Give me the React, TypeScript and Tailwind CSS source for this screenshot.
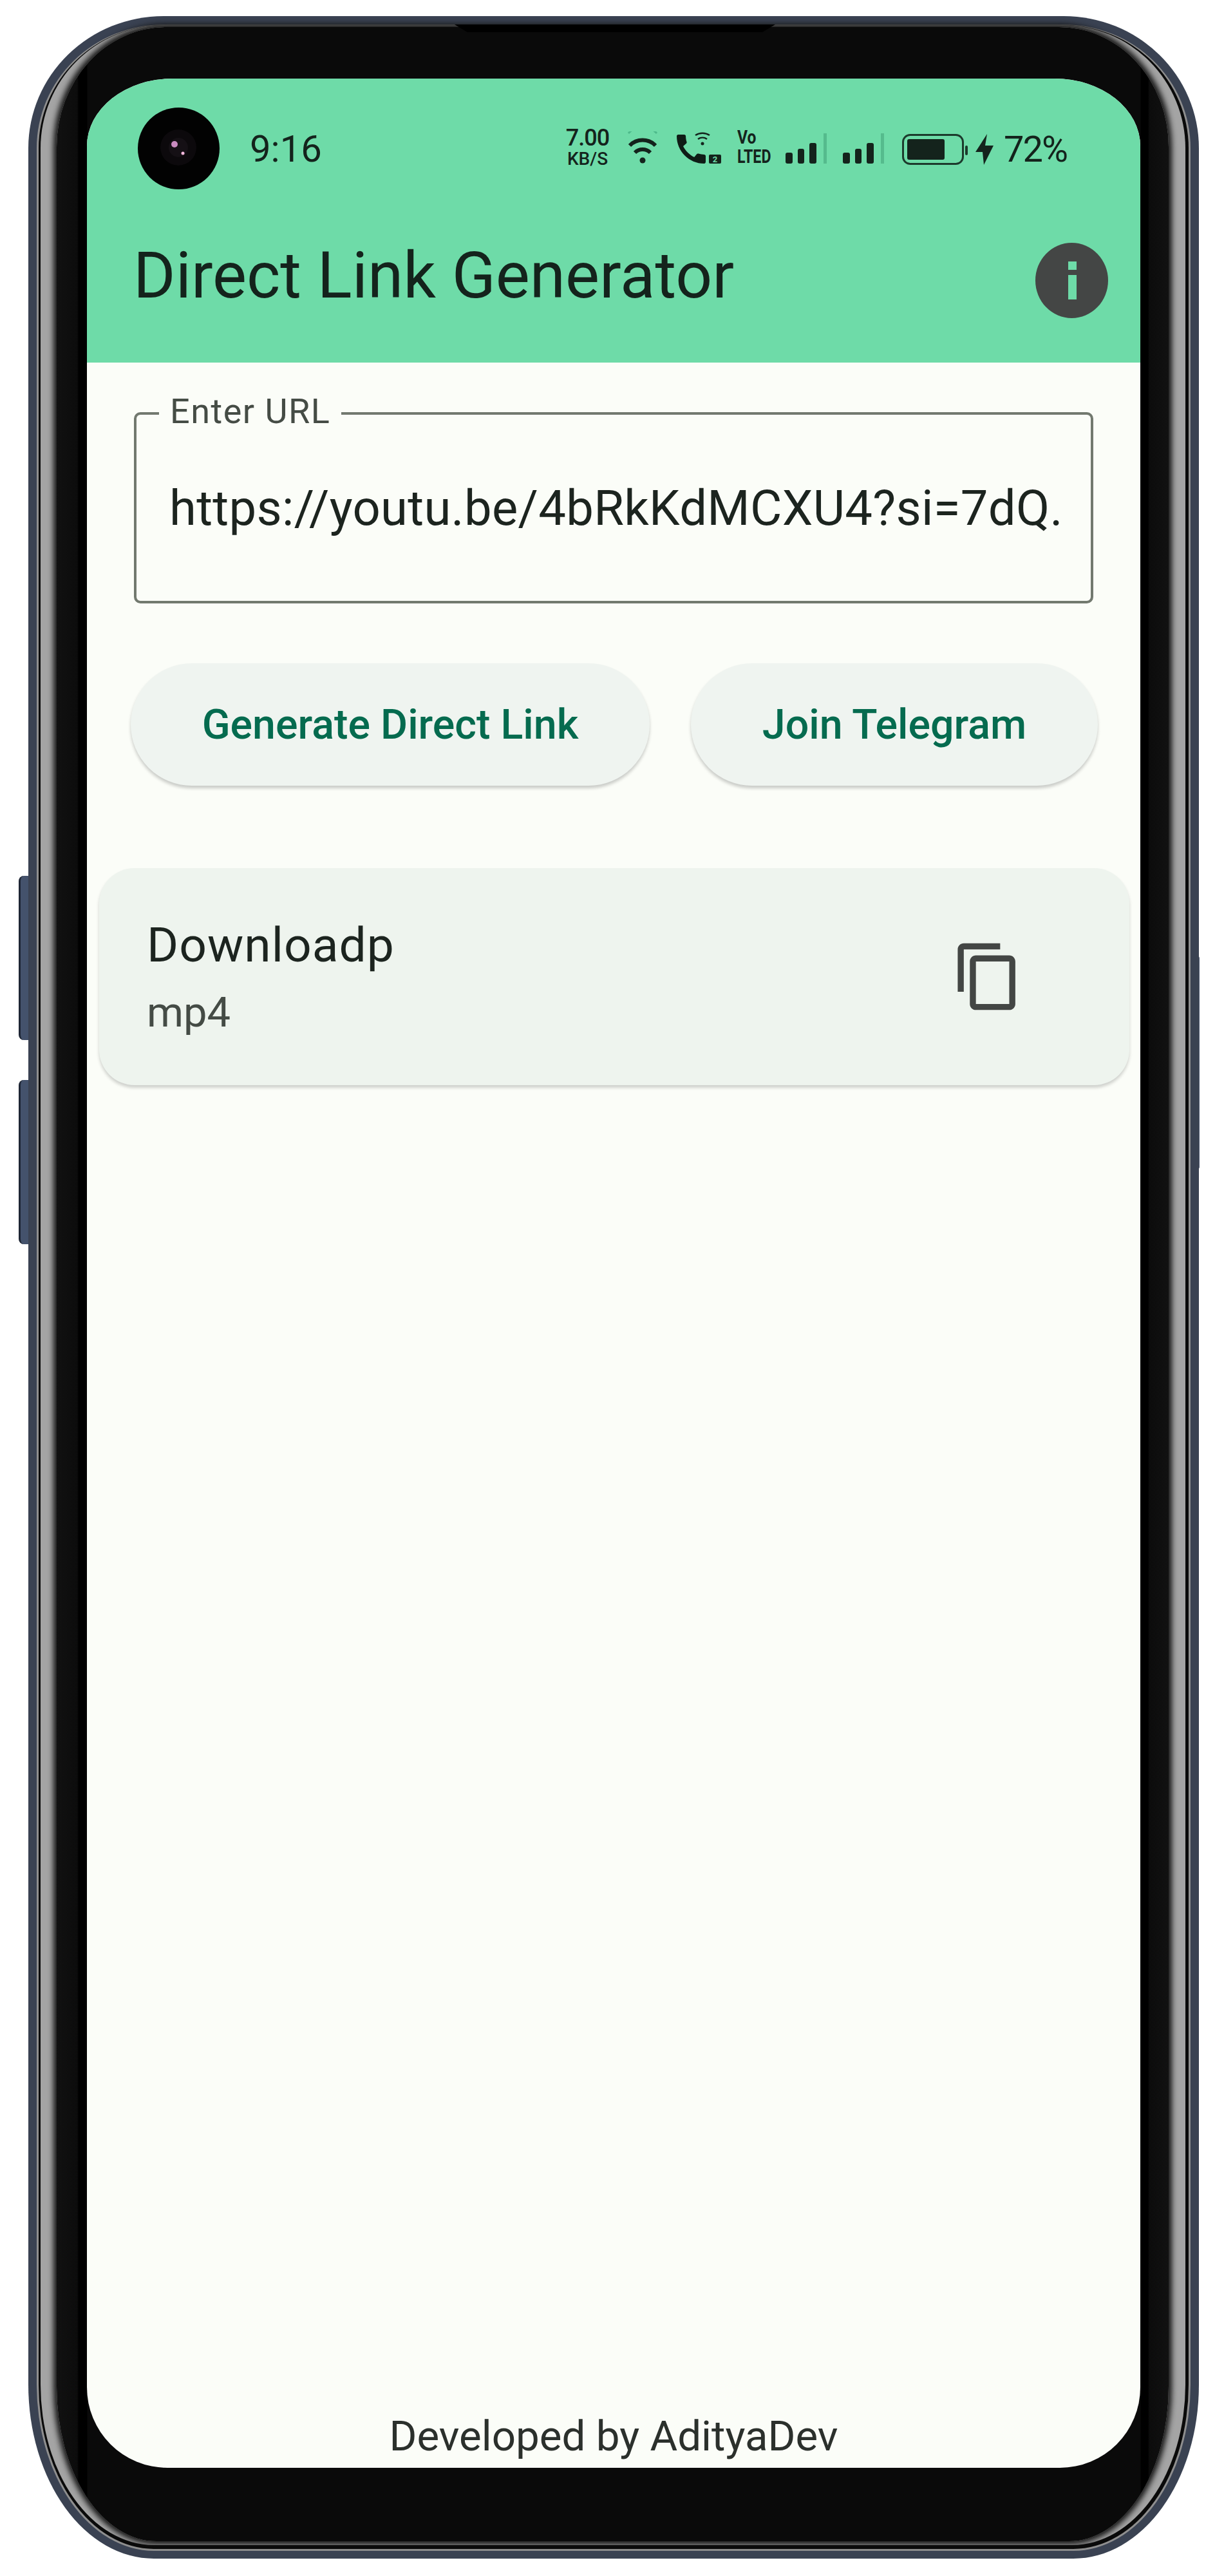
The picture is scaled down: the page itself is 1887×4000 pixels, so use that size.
function Camera() {
  return (
    <svg className="w-[127px] h-[127px] shrink-0" viewBox="0 0 127 127">
      <circle cx="63.5" cy="63.5" r="63.5" fill="#020202" />
      <circle cx="63" cy="62" r="28" fill="#0c090c" />
      <circle cx="63" cy="62" r="15" fill="#151015" />
      <circle cx="57" cy="57" r="5" fill="#c98bc0" />
      <circle cx="70" cy="71" r="2.5" fill="#f4b8dc" />
    </svg>
  );
}

function Wifi() {
  return (
    <svg className="w-[51px] h-[50px]" viewBox="0 0 51 50" fill="none" stroke="#14231c" strokeWidth="6">
      <path d="M3 3 A30 30 0 0 1 47 3" stroke="#4db98a" strokeWidth="3" />
      <path d="M5 22 A28 28 0 0 1 45 22" />
      <path d="M13 33 A17 17 0 0 1 37 33" />
      <circle cx="25" cy="45" r="4.5" fill="#14231c" stroke="none" />
    </svg>
  );
}

function WifiCall() {
  return (
    <svg className="w-[69px] h-[50px]" viewBox="0 0 69 50">
      <path
        transform="translate(-7.5,-2.5) scale(2.5)"
        fill="#0f1c16"
        d="M20.01 15.38c-1.23 0-2.42-.2-3.53-.56-.35-.12-.74-.03-1.01.24l-1.57 1.97c-2.83-1.35-5.48-3.9-6.89-6.83l1.95-1.66c.27-.28.35-.67.24-1.02-.37-1.11-.56-2.3-.56-3.53 0-.54-.45-.99-.99-.99H4.19C3.65 3 3 3.24 3 3.99 3 13.28 10.73 21 20.01 21c.71 0 .99-.63.99-1.18v-3.45c0-.54-.45-.99-.99-.99z"
      />
      <g fill="none" stroke="#14231c" strokeWidth="2.5">
        <path d="M29 6 A20 20 0 0 1 51 6" />
        <path d="M33 12 A12 12 0 0 1 47 12" />
      </g>
      <circle cx="40" cy="19" r="2.5" fill="#14231c" />
      <rect x="50" y="36" width="19" height="14" rx="2" fill="#14231c" />
      <text x="59.5" y="48" fontSize="13" fontWeight="700" textAnchor="middle" fill="#6edba8">
        2
      </text>
    </svg>
  );
}

function Signal() {
  return (
    <svg className="w-[65px] h-[47px]" viewBox="0 0 65 47">
      <rect x="0" y="30" width="11" height="17" rx="3" fill="#14231c" />
      <rect x="19" y="24" width="10" height="23" rx="3" fill="#14231c" />
      <rect x="37" y="15" width="11" height="32" rx="3" fill="#14231c" />
      <rect x="59" y="0" width="5" height="47" fill="#55bb8d" />
    </svg>
  );
}

function Battery() {
  return (
    <svg className="w-[102px] h-[48px]" viewBox="0 0 102 48">
      <rect x="1.5" y="1.5" width="93" height="45" rx="11" fill="none" stroke="#1c3a2c" strokeWidth="3" />
      <rect x="8" y="8" width="58" height="32" rx="3" fill="#14231c" />
      <rect x="98" y="18" width="4" height="15" rx="2" fill="#1c3a2c" />
    </svg>
  );
}

function Bolt() {
  return (
    <svg className="w-[28px] h-[48px]" viewBox="0 0 28 48">
      <polygon points="18,0 0,28 11,28 13,48 28,18 15,18" fill="#14231c" />
    </svg>
  );
}

function StatusBar() {
  return (
    <div className="flex items-center h-[127px] mt-[45px] pl-[79px] pr-[114px] text-[#14231c]">
      <Camera />
      <span className="ml-[47px] text-[58px] leading-none">9:16</span>
      <div className="ml-auto -mt-[4px] flex items-center">
        <div className="w-[71px] flex flex-col items-center font-medium leading-none">
          <span className="text-[36px] tracking-[-1px]">7.00</span>
          <span className="text-[28px] mt-[1px]">KB/S</span>
        </div>
        <div className="ml-[25px]">
          <Wifi />
        </div>
        <div className="ml-[27px]">
          <WifiCall />
        </div>
        <div className="ml-[25px] w-[51px] flex flex-col font-bold leading-none">
          <span className="text-[29px] origin-left scale-x-[0.85]">Vo</span>
          <span className="text-[29px] mt-[1px] origin-left scale-x-[0.8]">LTED</span>
        </div>
        <div className="ml-[24px] pt-[3px]">
          <Signal />
        </div>
        <div className="ml-[24px] pt-[3px]">
          <Signal />
        </div>
        <div className="ml-[27px] pt-[6px]">
          <Battery />
        </div>
        <div className="ml-[12px] pt-[6px]">
          <Bolt />
        </div>
        <span className="ml-[16px] pt-[6px] text-[56px] leading-none tracking-[-2px]">72%</span>
      </div>
    </div>
  );
}

function AppBar() {
  return (
    <div className="h-[441px] shrink-0 bg-[#6edba8]">
      <StatusBar />
      <div className="flex items-center justify-between mt-[83px] pl-[72px] pr-[50px]">
        <h1 className="text-[100px] leading-none pb-[16px] font-normal text-[#14231c]">Direct Link Generator</h1>
        <svg className="w-[113px] h-[117px]" viewBox="0 0 113 117">
          <ellipse cx="56.5" cy="58.5" rx="56.5" ry="58.5" fill="#444645" />
          <rect x="51" y="29" width="13" height="13" fill="#6edba8" />
          <rect x="51" y="50" width="13" height="38" fill="#6edba8" />
        </svg>
      </div>
    </div>
  );
}

function UrlField() {
  return (
    <div className="relative ml-[73px] mt-[77px] w-[1490px] h-[297px] shrink-0 rounded-[10px] border-[4px] border-[#72796f] pl-[51px] pr-[40px] pt-[103px]">
      <span className="absolute left-[35px] top-[-30px] bg-[#fbfdf8] px-[17px] text-[54px] leading-[50px] tracking-[1.5px] text-[#454c45]">
        Enter URL
      </span>
      <div className="whitespace-nowrap text-[76px] leading-[85px] tracking-[0.3px] text-[#1c241f]">
        https://youtu.be/4bRkKdMCXU4?si=7dQ.
      </div>
    </div>
  );
}

function PillButton({ label, width }: { label: string; width: string }) {
  return (
    <button className={`${width} h-[190px] rounded-full bg-[#eff4f0] text-[64.5px] font-medium text-[#056b4f] shadow-[0_4px_5px_rgba(0,0,0,0.2)]`}>
      {label}
    </button>
  );
}

function ResultCard() {
  return (
    <div className="flex items-center justify-between ml-[19px] mt-[128px] w-[1600px] h-[337px] shrink-0 rounded-[55px] bg-[#eef4ee] pl-[74px] pr-[163px] shadow-[0_4px_5px_rgba(0,0,0,0.18)]">
      <div className="flex flex-col">
        <span className="text-[75px] leading-[82px] tracking-[1px] text-[#1c241f]">Downloadp</span>
        <span className="text-[65px] leading-[70px] mt-[29px] text-[#444b45]">mp4</span>
      </div>
      <svg className="w-[113px] h-[113px]" viewBox="0 0 24 24" fill="#434644">
        <path d="M16 1H4c-1.1 0-2 .9-2 2v14h2V3h12V1zm3 4H8c-1.1 0-2 .9-2 2v14c0 1.1.9 2 2 2h11c1.1 0 2-.9 2-2V7c0-1.1-.9-2-2-2zm0 16H8V7h11v14z" />
      </svg>
    </div>
  );
}

export default function App() {
  return (
    <div className="w-[1887px] h-[4000px] bg-white pl-[44px] pt-[25px] font-[Roboto,sans-serif]">
      <div className="relative w-[1818px] h-[3948px]">
        {/* side buttons */}
        <div className="absolute left-[-15px] top-[1335px] w-[24px] h-[255px] rounded-l-[8px] border-l-[3px] border-[#1e2635] bg-[#44526c]" />
        <div className="absolute left-[-15px] top-[1652px] w-[24px] h-[255px] rounded-l-[8px] border-l-[3px] border-[#1e2635] bg-[#44526c]" />
        <div className="absolute right-[-1px] top-[1460px] w-[9px] h-[330px] rounded-r-[3px] bg-[#525d74]" />

        {/* frame layers */}
        <div className="relative flex h-full rounded-[210px_210px_195px_195px/205px_205px_270px_270px] bg-[#3a4252] p-[13px] pb-[12px]">
          <div className="flex flex-1 rounded-[197px_197px_182px_182px/192px_192px_258px_258px] bg-[#8f8f8f] px-[3px] pt-[1px] pb-[3px]">
            <div className="flex flex-1 rounded-[194px_194px_179px_179px/191px_191px_255px_255px] bg-[#0a0a0a] pl-[3px] pr-[5px] pb-[6px]">
              <div className="flex flex-1 rounded-[191px_191px_176px_176px/191px_191px_249px_249px] bg-[#a4a4a4] pl-[25px] pr-[26px] pt-[3px] pb-[6px]">
                <div className="flex flex-1 rounded-[170px_170px_155px_155px/186px_186px_240px_240px] bg-[linear-gradient(90deg,#111_0,#0c0c0c_32px,#000_34px,#000_47px,#0a0a0a_48px,#0a0a0a_1683px,#000_1684px,#000_1695px,#0c0c0c_1697px,#111_100%)] shadow-[0_0_9px_5px_#161616] pl-[47px] pr-[44px] pt-[80px] pb-[114px]">
                  <div className="flex flex-col flex-1 overflow-hidden rounded-[133px_133px_125px_125px/105px_105px_125px_125px] bg-[#fbfdf8]">
                    <AppBar />
                    <UrlField />
                    <div className="flex gap-[64px] ml-[68px] mt-[93px] shrink-0">
                      <PillButton label="Generate Direct Link" width="w-[806px]" />
                      <PillButton label="Join Telegram" width="w-[632px]" />
                    </div>
                    <ResultCard />
                    <div className="mt-auto pb-[12px] text-center text-[65.5px] leading-[74px] text-[#2b302c]">
                      Developed by AdityaDev
                    </div>
                  </div>
                </div>
              </div>
            </div>
          </div>
        </div>

        {/* speaker notch */}
        <div className="absolute left-[662px] top-[13px] w-[498px] h-[12px] bg-black [clip-path:polygon(0_0,100%_0,96%_100%,4%_100%)]" />
      </div>
    </div>
  );
}
